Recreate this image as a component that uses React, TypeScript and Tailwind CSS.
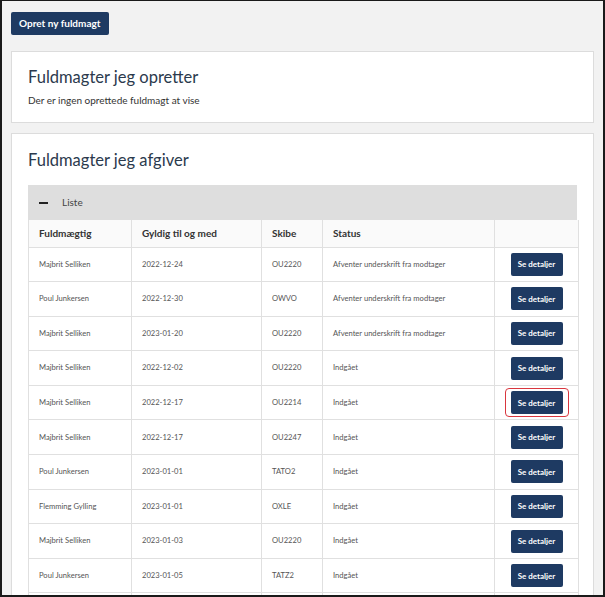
import React from 'react';

type Row = {
  name: string;
  until: string;
  ship: string;
  status: string;
  highlight?: boolean;
};

const rows: Row[] = [
  { name: 'Majbrit Selliken', until: '2022-12-24', ship: 'OU2220', status: 'Afventer underskrift fra modtager' },
  { name: 'Poul Junkersen', until: '2022-12-30', ship: 'OWVO', status: 'Afventer underskrift fra modtager' },
  { name: 'Majbrit Selliken', until: '2023-01-20', ship: 'OU2220', status: 'Afventer underskrift fra modtager' },
  { name: 'Majbrit Selliken', until: '2022-12-02', ship: 'OU2220', status: 'Indgået' },
  { name: 'Majbrit Selliken', until: '2022-12-17', ship: 'OU2214', status: 'Indgået', highlight: true },
  { name: 'Majbrit Selliken', until: '2022-12-17', ship: 'OU2247', status: 'Indgået' },
  { name: 'Poul Junkersen', until: '2023-01-01', ship: 'TATO2', status: 'Indgået' },
  { name: 'Flemming Gylling', until: '2023-01-01', ship: 'OXLE', status: 'Indgået' },
  { name: 'Majbrit Selliken', until: '2023-01-03', ship: 'OU2220', status: 'Indgået' },
  { name: 'Poul Junkersen', until: '2023-01-05', ship: 'TATZ2', status: 'Indgået' },
];

const DetailsButton: React.FC<{ highlight?: boolean }> = ({ highlight }) => {
  const btn = (
    <button className="h-[23px] w-[52px] rounded-[2px] bg-[#1e3a62] text-[8px] font-bold text-white">
      Se detaljer
    </button>
  );
  if (!highlight) return btn;
  return (
    <span className="inline-flex rounded-[4px] border border-[#d9363e] px-[5px] py-[2px]">{btn}</span>
  );
};

const App: React.FC = () => {
  return (
    <div
      className="h-[597px] w-[605px] overflow-hidden border-x-2 border-t border-b-2 border-[#1a1a1a] bg-[#f2f2f2] text-[#2d2d2d]"
      style={{ fontFamily: 'Lato, "Open Sans", sans-serif' }}
    >
      <div className="px-[9px] pt-[11px]">
        <button className="block h-[23px] rounded-[2px] bg-[#1e3a62] px-[8px] text-[10px] font-bold text-white">
          Opret ny fuldmagt
        </button>

        <div className="mt-[16px] h-[72px] border border-[#dcdcdc] bg-white px-[16px] pt-[14px]">
          <h2 className="text-[16.5px] leading-[22px] text-[#2b3a4d]">Fuldmagter jeg opretter</h2>
          <p className="mt-[5px] text-[10px] text-[#333]">Der er ingen oprettede fuldmagt at vise</p>
        </div>

        <div className="mt-[10px] border border-[#dcdcdc] bg-white px-[16px] pt-[15px]">
          <h2 className="text-[16.5px] leading-[22px] text-[#2b3a4d]">Fuldmagter jeg afgiver</h2>

          <div className="mt-[14px] flex h-[35px] items-center bg-[#dedede] pl-[11px]">
            <span className="block h-[2px] w-[9px] bg-[#222]" />
            <span className="ml-[14px] text-[10px] text-[#444]">Liste</span>
          </div>

          <table className="w-[550px] table-fixed border-collapse text-[7.6px] text-[#555]">
            <colgroup>
              <col className="w-[103px]" />
              <col className="w-[130px]" />
              <col className="w-[61px]" />
              <col className="w-[172px]" />
              <col className="w-[84px]" />
            </colgroup>
            <thead>
              <tr className="h-[27px] bg-[#fafafa] text-left text-[10px] font-bold text-[#333]">
                <th className="border-x border-[#e0e0e0] pl-[10px]">Fuldmægtig</th>
                <th className="border-x border-[#e0e0e0] pl-[10px]">Gyldig til og med</th>
                <th className="border-x border-[#e0e0e0] pl-[10px]">Skibe</th>
                <th className="border-x border-[#e0e0e0] pl-[10px]">Status</th>
                <th className="border-x border-[#e0e0e0]" />
              </tr>
            </thead>
            <tbody>
              {rows.map((r, i) => (
                <tr key={i} className="h-[34.6px] border-t border-[#e0e0e0]">
                  <td className="border-x border-[#e0e0e0] pl-[10px]">{r.name}</td>
                  <td className="border-x border-[#e0e0e0] pl-[10px]">{r.until}</td>
                  <td className="border-x border-[#e0e0e0] pl-[10px]">{r.ship}</td>
                  <td className="border-x border-[#e0e0e0] pl-[10px]">{r.status}</td>
                  <td className="border-x border-[#e0e0e0] text-center">
                    <DetailsButton highlight={r.highlight} />
                  </td>
                </tr>
              ))}
              <tr className="h-[34.6px] border-t border-[#e0e0e0]">
                <td className="border-x border-[#e0e0e0]" />
                <td className="border-x border-[#e0e0e0]" />
                <td className="border-x border-[#e0e0e0]" />
                <td className="border-x border-[#e0e0e0]" />
                <td className="border-x border-[#e0e0e0]" />
              </tr>
            </tbody>
          </table>
        </div>
      </div>
    </div>
  );
};

export default App;
